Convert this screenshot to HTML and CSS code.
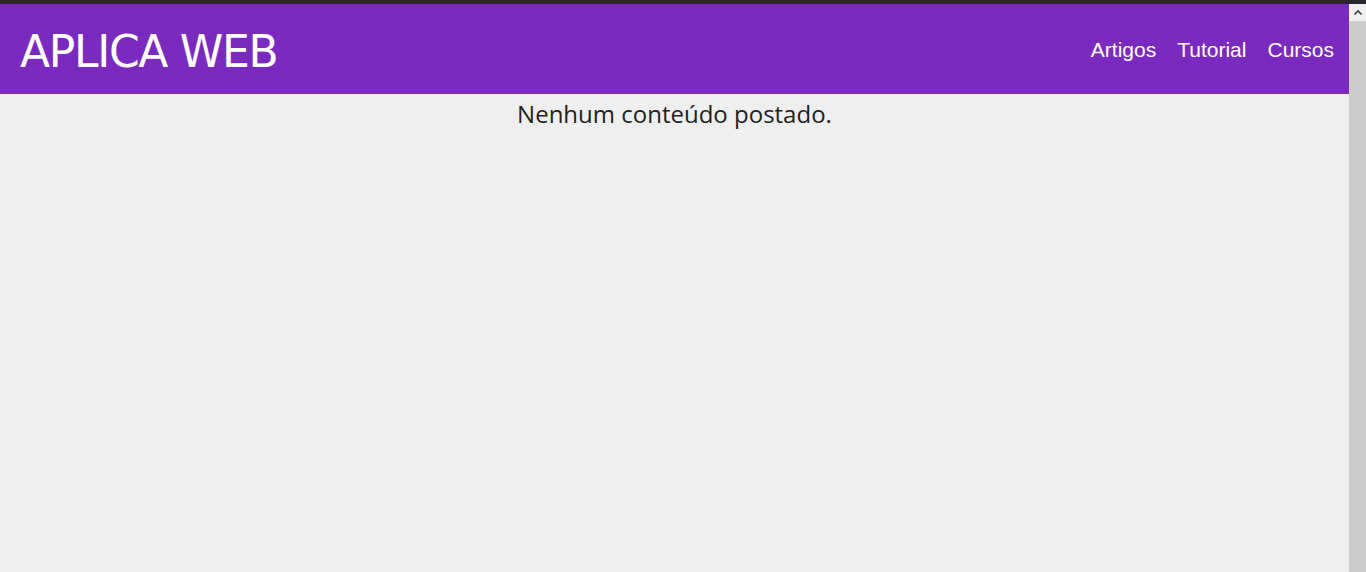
FILE: index.html
```html
<!DOCTYPE html>
<html lang="pt">
<head>
<meta charset="utf-8">
<title>Aplica Web</title>
<link rel="stylesheet" href="styles.css">
</head>
<body>
<div class="window">
  <div class="topline"></div>
  <div class="viewport">
    <div class="page">
      <header class="header">
        <h1 class="brand">APLICA WEB</h1>
        <nav class="nav">
          <a href="#">Artigos</a>
          <a href="#">Tutorial</a>
          <a href="#">Cursos</a>
        </nav>
      </header>
      <main class="content">
        <p class="empty">Nenhum conteúdo postado.</p>
      </main>
    </div>
    <div class="scrollbar">
      <div class="arrow">
        <svg width="10" height="7" viewBox="0 0 10 7"><path d="M1.5 5.5 L5 2 L8.5 5.5" fill="none" stroke="#404040" stroke-width="1.6"/></svg>
      </div>
      <div class="track"></div>
    </div>
  </div>
</div>
</body>
</html>
```
FILE: styles.css
```css
html, body {
  margin: 0;
  padding: 0;
  overflow: hidden;
}
.window {
  width: 1366px;
  height: 572px;
  display: flex;
  flex-direction: column;
}
.topline {
  height: 4px;
  background: #2a272e;
}
.viewport {
  flex: 1;
  display: flex;
}
.page {
  flex: 1;
  background: #efefef;
}
.header {
  height: 90px;
  background: #7b2abf;
  display: flex;
  align-items: center;
  justify-content: space-between;
  padding: 0 15px 0 20px;
}
.brand {
  margin: 0;
  padding-top: 4px;
  font-family: "DejaVu Sans", Tahoma, sans-serif;
  font-weight: normal;
  font-size: 44px;
  color: #fff;
  letter-spacing: -1.3px;
}
.nav {
  display: flex;
  gap: 21px;
  padding-top: 2px;
}
.nav a {
  font-family: "Liberation Sans", Arial, sans-serif;
  font-size: 21px;
  color: #fff;
  text-decoration: none;
}
.content {
  text-align: center;
}
.empty {
  margin: 0;
  padding-top: 3px;
  font-family: "Open Sans", "Segoe UI", sans-serif;
  font-size: 24px;
  color: #222;
}
.scrollbar {
  width: 17px;
  display: flex;
  flex-direction: column;
  background: #cdcdcd;
}
.arrow {
  height: 17px;
  background: #f0f0f0;
  display: flex;
  align-items: center;
  justify-content: center;
}
.track {
  flex: 1;
}
```
